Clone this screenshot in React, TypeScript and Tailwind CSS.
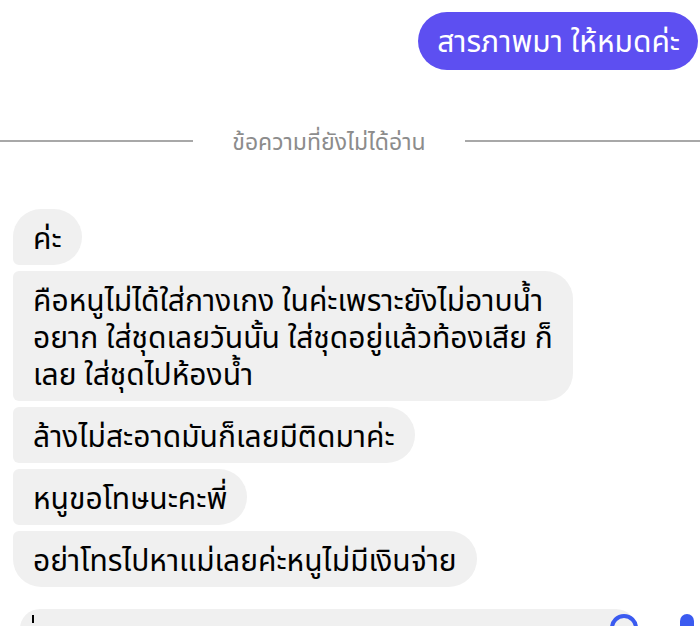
import React from 'react';

type Msg = { id: number; lines: string[]; shape: string };

const received: Msg[] = [
  { id: 1, lines: ['ค่ะ'], shape: 'rounded-tl-[28px] rounded-bl-[6px]' },
  {
    id: 2,
    lines: [
      'คือหนูไม่ได้ใส่กางเกง ในค่ะเพราะยังไม่อาบน้ำ',
      'อยาก ใส่ชุดเลยวันนั้น ใส่ชุดอยู่แล้วท้องเสีย ก็',
      'เลย ใส่ชุดไปห้องน้ำ',
    ],
    shape: 'rounded-l-[6px]',
  },
  { id: 3, lines: ['ล้างไม่สะอาดมันก็เลยมีติดมาค่ะ'], shape: 'rounded-l-[6px]' },
  { id: 4, lines: ['หนูขอโทษนะคะพี่'], shape: 'rounded-l-[6px]' },
  { id: 5, lines: ['อย่าโทรไปหาแม่เลยค่ะหนูไม่มีเงินจ่าย'], shape: 'rounded-tl-[6px] rounded-bl-[28px]' },
];

export default function App() {
  return (
    <div className="w-[700px] h-[626px] overflow-hidden bg-white font-['Noto_Sans','Noto_Sans_Thai',sans-serif] text-black">
      {/* sent */}
      <div className="flex justify-end pt-[12px] pr-[2px]">
        <div className="h-[58px] rounded-full bg-[#5d4ff1] pl-[19px] pr-[18px] flex items-center text-[30px] leading-[36px] text-white">
          สารภาพมา ให้หมดค่ะ
        </div>
      </div>

      {/* unread divider */}
      <div className="mt-[56px] flex items-center">
        <div className="w-[193px] h-[2px] bg-[#a8a8a8]" />
        <div className="flex-1 text-center text-[23px] leading-[30px] text-[#8c8c8c]">ข้อความที่ยังไม่ได้อ่าน</div>
        <div className="w-[235px] h-[2px] bg-[#a8a8a8]" />
      </div>

      {/* received */}
      <div className="mt-[53px] pl-[13px] flex flex-col items-start gap-[6px]">
        {received.map((m) => (
          <div
            key={m.id}
            className={`rounded-r-[28px] ${m.shape} bg-[#f0f0f0] px-[20px] pt-[10px] pb-[9px] text-[30px] leading-[37px]`}
          >
            {m.lines.map((l, i) => (
              <div key={i} className="whitespace-nowrap">{l}</div>
            ))}
          </div>
        ))}
      </div>

      {/* composer */}
      <div className="mt-[22px] flex items-start">
        <div className="ml-[20px] w-[616px] h-[40px] rounded-[20px] bg-[#f0f0f0] pl-[12px] pt-[6px]">
          <div className="w-[2px] h-[8px] bg-black" />
        </div>
        <div className="-ml-[26px] mt-[5px] w-[28px] h-[28px] rounded-full border-[4px] border-[#3b5bf0]" />
        <div className="ml-[42px] mt-[5px] w-[14px] h-[28px] rounded-t-full bg-[#3b5bf0]" />
      </div>
    </div>
  );
}
